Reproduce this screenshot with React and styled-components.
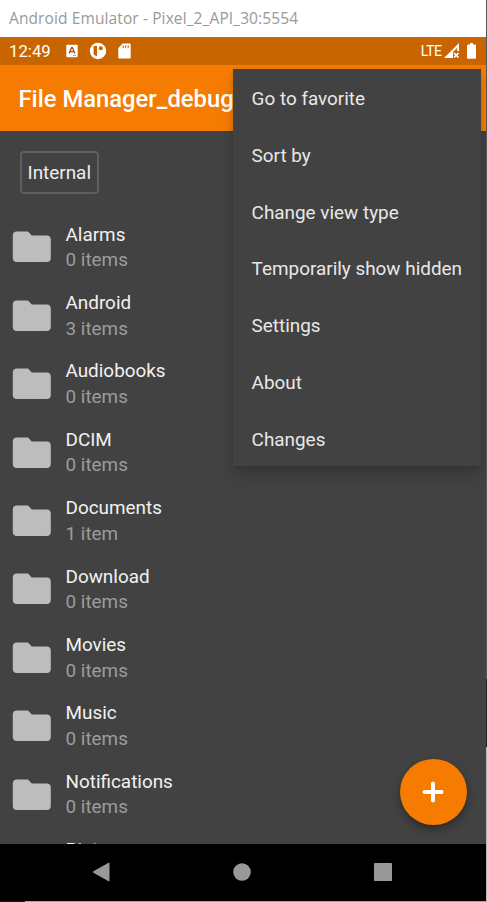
import React from "react";
import styled, { createGlobalStyle } from "styled-components";

const GlobalStyle = createGlobalStyle`
  * { box-sizing: border-box; }
  body { margin: 0; background: #fff; font-family: Roboto, sans-serif; overflow: hidden; }
`;

const Window = styled.div`
  width: 487px;
  height: 902px;
  display: flex;
  flex-direction: column;
  overflow: hidden;
  background: linear-gradient(90deg, #1c1718 25px, #aaa5a3 25px) 0 901px / 486px 1px no-repeat,
    linear-gradient(#55575c 679px, #222 679px, #222 747px, #b4b4b4 747px);
`;

const TitleBar = styled.header`
  width: 486px;
  height: 37px;
  flex: none;
  padding-left: 9px;
  background: #fff;
  color: #999;
  font: 400 15.5px/37px "Open Sans", sans-serif;
  letter-spacing: 0.11px;
  white-space: nowrap;
`;

const Screen = styled.main`
  position: relative;
  width: 486px;
  height: 864px;
  flex: none;
  display: flex;
  flex-direction: column;
  background: #424242;
`;

const StatusBar = styled.div`
  height: 28px;
  flex: none;
  display: flex;
  align-items: center;
  padding: 0 10px 0 9px;
  background: #c96500;
  color: #fff;
`;

const Clock = styled.span`
  width: 57px;
  font-size: 16.8px;
  line-height: 28px;
`;

const StatusIcons = styled.div`
  display: flex;
  align-items: center;
  gap: 11px;
`;

const Signals = styled.div`
  margin-left: auto;
  display: flex;
  align-items: center;
`;

const Network = styled.span`
  margin-right: 2.5px;
  font-size: 14.2px;
  line-height: 28px;
  letter-spacing: -0.5px;
`;

const BatteryIcon = styled.svg`
  margin-left: 7px;
`;

const AppBar = styled.div`
  height: 66px;
  flex: none;
  padding-left: 18.5px;
  background: #f57c00;
  color: #fff;
  font-size: 23.8px;
  font-weight: 500;
  line-height: 68px;
  white-space: nowrap;
`;

const Content = styled.section`
  flex: 1;
  min-height: 0;
  overflow: hidden;
`;

const Breadcrumbs = styled.div`
  height: 82.1px;
  padding: 19.5px 19.5px 0;
`;

const Crumb = styled.div`
  width: 79.5px;
  height: 43.5px;
  border: 2px solid #5e5e5e;
  border-radius: 4px;
  color: #eee;
  font-size: 18.9px;
  line-height: 40.5px;
  text-align: center;
`;

const Row = styled.div`
  height: 68.4px;
  display: flex;
  align-items: center;
  gap: 11.3px;
  padding-left: 8.6px;
`;

const Labels = styled.div`
  display: flex;
  flex-direction: column;
  font-size: 18.9px;
  line-height: 25.6px;
`;

const Name = styled.span`
  color: #f1f1f1;
`;

const Count = styled.span`
  color: #9c9c9c;
`;

const Menu = styled.div`
  position: absolute;
  top: 32.4px;
  left: 232.8px;
  width: 248px;
  height: 397px;
  background: #424242;
  box-shadow: 0 10px 14px rgba(0, 0, 0, 0.14), 0 2px 5px rgba(0, 0, 0, 0.12);
`;

const MenuItem = styled.div`
  height: 56.7px;
  padding-left: 18.8px;
  color: #e8e8e8;
  font-size: 18.9px;
  line-height: 59px;
  white-space: nowrap;
`;

const AddButton = styled.div`
  position: absolute;
  left: 400px;
  top: 721.6px;
  width: 66.5px;
  height: 66.5px;
  border-radius: 50%;
  display: grid;
  place-items: center;
  background: #f57c00;
  box-shadow: 0 5px 10px rgba(0, 0, 0, 0.3), 0 1px 3px rgba(0, 0, 0, 0.12);
`;

const NavBar = styled.nav`
  height: 57px;
  flex: none;
  display: flex;
  align-items: center;
  justify-content: space-between;
  padding: 0 94.5px 1px 92px;
  background: #000;
`;

const folders = [
  ["Alarms", "0 items"],
  ["Android", "3 items"],
  ["Audiobooks", "0 items"],
  ["DCIM", "0 items"],
  ["Documents", "1 item"],
  ["Download", "0 items"],
  ["Movies", "0 items"],
  ["Music", "0 items"],
  ["Notifications", "0 items"],
  ["Pictures", "0 items"],
];

const actions = [
  "Go to favorite",
  "Sort by",
  "Change view type",
  "Temporarily show hidden",
  "Settings",
  "About",
  "Changes",
];

const FolderIcon = () => (
  <svg width="45.6" height="45.6" viewBox="0 0 24 24" fill="#bdbdbd">
    <path d="M10 4H4c-1.1 0-2 .9-2 2v12c0 1.1.9 2 2 2h16c1.1 0 2-.9 2-2V8c0-1.1-.9-2-2-2h-8l-2-2z" />
  </svg>
);

export default function App() {
  return (
    <Window>
      <GlobalStyle />
      <TitleBar>Android Emulator - Pixel_2_API_30:5554</TitleBar>
      <Screen>
        <StatusBar>
          <Clock>12:49</Clock>
          <StatusIcons>
            <svg width="12" height="14" viewBox="0 0 12 14">
              <rect x="0.3" y="0.8" width="11.4" height="12.4" rx="1" fill="#fff" />
              <path d="M3.2 9.3 5.6 3.7h.8L8.8 9.3M4.2 7.6h3.8" fill="none" stroke="#9f520b" strokeWidth="1.3" />
              <path d="M7 11.4h3" stroke="#c96500" strokeWidth="0.7" />
            </svg>
            <svg width="18" height="18" viewBox="0 0 18 18">
              <circle cx="9" cy="9" r="8.2" fill="#fff" />
              <path d="M4.6 4h3.4v10.2a5 5 0 0 1-3.4-2z" fill="#c96500" />
              <circle cx="11.8" cy="6.2" r="2" fill="#c96500" />
            </svg>
            <svg width="13" height="16" viewBox="0 0 13 16">
              <path d="M4.7.5h6.8q1.2 0 1.2 1.2v12.6q0 1.2-1.2 1.2h-10Q.3 15.5.3 14.3V5z" fill="#fff" />
              <path d="M5.2 2.2v3M7.7 2.2v3M10.2 2.2v3" stroke="#c96500" strokeWidth="1" />
            </svg>
          </StatusIcons>
          <Signals>
            <Network>LTE</Network>
            <svg width="16" height="16" viewBox="0 0 16 16">
              <path d="M0 15 15 0v8h-1.8V4.8L9 9v6z" fill="#fff" />
              <path d="m10 10 4.5 4.5m0-4.5L10 14.5" stroke="#fff" strokeWidth="1.7" />
            </svg>
            <BatteryIcon width="9" height="16" viewBox="0 0 9 16">
              <path d="M3 0h3v1.5h2q1 0 1 1v12.3q0 1-1 1H1q-1 0-1-1V2.5q0-1 1-1h2z" fill="#fff" />
            </BatteryIcon>
          </Signals>
        </StatusBar>
        <AppBar>File Manager_debug</AppBar>
        <Content>
          <Breadcrumbs>
            <Crumb>Internal</Crumb>
          </Breadcrumbs>
          {folders.map(([name, count]) => (
            <Row key={name}>
              <FolderIcon />
              <Labels>
                <Name>{name}</Name>
                <Count>{count}</Count>
              </Labels>
            </Row>
          ))}
        </Content>
        <NavBar>
          <svg width="18" height="20" viewBox="0 0 18 20">
            <path d="M17 1v18L1 10z" fill="#999" stroke="#999" strokeWidth="1" strokeLinejoin="round" />
          </svg>
          <svg width="18" height="18" viewBox="0 0 18 18">
            <circle cx="9" cy="9" r="8.8" fill="#999" />
          </svg>
          <svg width="18" height="18" viewBox="0 0 18 18">
            <rect width="18" height="18" rx="0.8" fill="#999" />
          </svg>
        </NavBar>
        <Menu>
          {actions.map((label) => (
            <MenuItem key={label}>{label}</MenuItem>
          ))}
        </Menu>
        <AddButton>
          <svg width="22" height="22" viewBox="0 0 22 22">
            <path d="M11 2.5v17M2.5 11h17" stroke="#fff" strokeWidth="4" strokeLinecap="round" />
          </svg>
        </AddButton>
      </Screen>
    </Window>
  );
}
